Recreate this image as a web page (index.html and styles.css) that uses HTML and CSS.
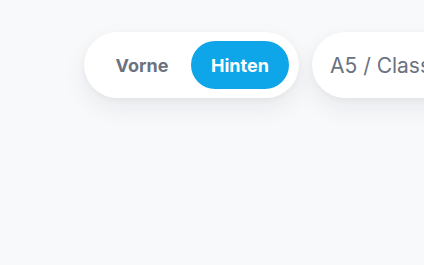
FILE: index.html
```html
<!DOCTYPE html>
<html lang="de">
<head>
<meta charset="utf-8">
<link rel="stylesheet" href="styles.css">
</head>
<body>
<div class="toolbar">
  <div class="pill toggle">
    <button class="seg">Vorne</button>
    <button class="seg active">Hinten</button>
  </div>
  <div class="pill format">
    <span class="format-label">A5 / Classic</span>
  </div>
</div>
</body>
</html>
```

FILE: styles.css
```css
html, body {
  margin: 0;
  padding: 0;
  background: #f8f9fb;
  width: 424px;
  height: 265px;
  overflow: hidden;
  font-family: Inter, "Noto Sans", sans-serif;
}
.toolbar {
  display: flex;
  gap: 13px;
  padding: 32px 0 0 84px;
  width: max-content;
}
.pill {
  background: #ffffff;
  border-radius: 33px;
  height: 66px;
  box-sizing: border-box;
  box-shadow: 0 10px 24px rgba(15, 23, 42, 0.07), 0 2px 6px rgba(15, 23, 42, 0.04);
  display: flex;
  align-items: center;
}
.toggle {
  display: grid;
  grid-template-columns: 98px 98px;
  align-content: center;
  padding: 0 10px 0 9px;
}
.seg {
  border: 0;
  background: transparent;
  font-family: inherit;
  font-weight: 700;
  font-size: 18px;
  color: #6b7280;
  height: 48px;
  padding: 0;
  border-radius: 24px;
  cursor: pointer;
}
.seg.active {
  background: #0ea5e9;
  color: #ffffff;
}
.format {
  padding: 0 40px 0 18px;
}
.format-label {
  font-size: 21px;
  color: #6b7280;
  white-space: nowrap;
}
```
